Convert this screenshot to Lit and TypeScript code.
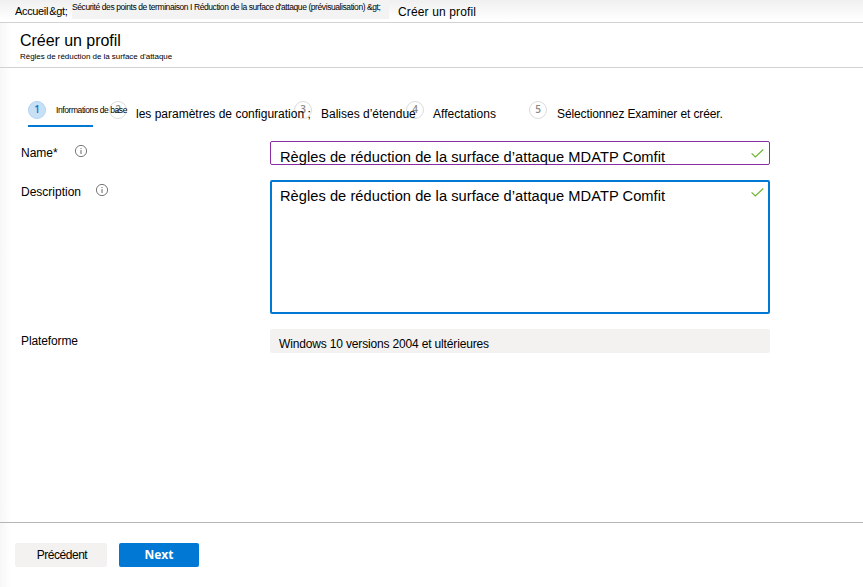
import { LitElement, html, css } from "lit";
import { customElement, property } from "lit/decorators.js";
import { classMap } from "lit/directives/class-map.js";

const infoIcon = html`<svg class="info" width="13" height="13" viewBox="0 0 13 13" fill="none" stroke="#6b6967">
  <circle cx="6" cy="6" r="5.6" stroke-width="0.9" />
  <path d="M6 5V9M6 3V4" stroke-width="1" />
</svg>`;

const checkIcon = html`<svg class="check" width="13" height="9" viewBox="0 0 13 9" fill="none" stroke="#6bb12c" stroke-width="1.1">
  <path d="M0.6 4.4L4.3 8L12.3 0.5" />
</svg>`;

interface Step { label: string; width: number; tone: string; }

const steps: Step[] = [
  { label: "Informations de base", width: 81, tone: "current" },
  { label: "les paramètres de configuration ;", width: 185, tone: "config" },
  { label: "Balises d’étendue", width: 112, tone: "tags" },
  { label: "Affectations", width: 123, tone: "assign" },
  { label: "Sélectionnez Examiner et créer.", width: 240, tone: "review" },
];

@customElement("wizard-steps")
export class WizardSteps extends LitElement {
  @property({ type: Array }) steps: Step[] = [];

  static styles = css`
    :host { display: block; }
    .steps { display: flex; padding-left: 28px; height: 27px; }
    .step { display: flex; flex: none; white-space: nowrap; box-sizing: border-box; align-items: flex-start; }
    .marker {
      box-sizing: border-box; flex: none; width: 18px; height: 18px; border-radius: 50%;
      border: 1px solid #dcdcdc; font: 600 10px/15px "Open Sans", sans-serif; text-align: center; color: #8a8886;
    }
    .label { position: relative; z-index: 1; font: 12px/14px "Liberation Sans", Arial, sans-serif; color: #000; margin: 6px 0 0 9px; }
    .current .marker { background: #c7e0f4; border-color: #b3d3f5; color: #0078d4; }
    .current .label { font-size: 8.5px; line-height: 10px; margin: 4px 0 0 10px; letter-spacing: -0.42px; }
    .assign .label { letter-spacing: 0.04px; }
    .review .label { margin-left: 10px; letter-spacing: -0.12px; }
    .bar { width: 65px; height: 2px; background: #0078d4; margin: -3px 0 0 28px; }
  `;

  render() {
    return html`<div class="steps">
        ${this.steps.map((s, i) => html`<div class=${classMap({ step: true, [s.tone]: true })} style="width:${s.width}px">
          <span class="marker">${i + 1}</span><span class="label">${s.label}</span>
        </div>`)}
      </div>
      <div class="bar"></div>`;
  }
}

@customElement("app-root")
export class AppRoot extends LitElement {
  static styles = css`
    :host {
      display: block; height: 587px; overflow: hidden; color: #000;
      background: linear-gradient(90deg, #f7f7f7, #fff 11px);
      font: 12px/14px "Liberation Sans", Arial, sans-serif; white-space: nowrap;
    }
    .page { display: flex; flex-direction: column; height: 587px; }
    .crumbs {
      display: flex; align-items: flex-start; box-sizing: border-box; height: 23px; padding-left: 15px;
      border-bottom: 1px solid #d2d2d2; background: linear-gradient(#f0f0f0, #fff 20px);
    }
    .home { width: 53px; margin-top: 4px; font-size: 11px; letter-spacing: -0.35px; word-spacing: -1.5px; }
    .section { box-sizing: border-box; width: 317px; height: 19px; background: #f3f3f3; margin-left: 4px; font-size: 8.5px; line-height: 15px; letter-spacing: -0.42px; }
    .here { margin: 5px 0 0 9px; letter-spacing: 0.14px; }
    .heading { box-sizing: border-box; height: 45px; padding: 9px 0 0 20px; border-bottom: 1px solid #d2d2d2; }
    .title { font-size: 16px; line-height: 18px; letter-spacing: -0.04px; }
    .subtitle { font-size: 8px; line-height: 10px; margin-top: 2px; letter-spacing: -0.045px; }
    wizard-steps { margin-top: 33px; }
    .form {
      display: grid; grid-template-columns: 249px 500px; grid-template-rows: 24px 134px 24px; row-gap: 15px;
      padding: 14px 0 0 21px;
    }
    .field-label { display: flex; align-items: flex-start; padding-top: 5px; }
    .info { margin: -1px 0 0 17px; }
    .description .info { margin-left: 15px; }
    .platform-label { letter-spacing: -0.12px; }
    .box { display: flex; justify-content: space-between; box-sizing: border-box; border-radius: 2px; font-size: 14.67px; line-height: 17px; letter-spacing: 0.035px; }
    .name-box { border: 1px solid #8a2da5; padding: 7px 5px 0 9px; }
    .area-box { border: 2px solid #0078d4; padding: 6px 4px 0 8px; }
    .check { flex: none; }
    .platform { background: #f3f2f1; font-size: 12px; line-height: 14px; padding: 8px 9px 0; letter-spacing: -0.16px; }
    .footer { display: flex; gap: 12px; box-sizing: border-box; margin-top: auto; height: 65px; padding: 20px 15px 0; border-top: 1px solid #b5b5b5; }
    .button { border: 0; padding: 0; height: 24px; border-radius: 2px; font: 12px/24px "Liberation Sans", Arial, sans-serif; }
    .previous { width: 92px; background: #f3f2f1; color: #000; padding-left: 2px; letter-spacing: -0.48px; }
    .next { width: 80px; background: #0078d4; color: #fff; font: 700 12px/24px "Open Sans", sans-serif; }
  `;

  render() {
    const name = "Règles de réduction de la surface d’attaque MDATP Comfit";
    return html`<div class="page">
      <nav class="crumbs">
        <span class="home">Accueil &amp;gt;</span>
        <span class="section">Sécurité des points de terminaison I Réduction de la surface d'attaque (prévisualisation) &amp;gt;</span>
        <span class="here">Créer un profil</span>
      </nav>
      <header class="heading">
        <div class="title">Créer un profil</div>
        <div class="subtitle">Règles de réduction de la surface d'attaque</div>
      </header>
      <wizard-steps .steps=${steps}></wizard-steps>
      <main class="form">
        <div class="field-label"><span>Name*</span>${infoIcon}</div>
        <div class="box name-box"><span>${name}</span>${checkIcon}</div>
        <div class="field-label description"><span>Description</span>${infoIcon}</div>
        <div class="box area-box"><span>${name}</span>${checkIcon}</div>
        <div class="field-label platform-label"><span>Plateforme</span></div>
        <div class="box platform"><span>Windows 10 versions 2004 et ultérieures</span></div>
      </main>
      <footer class="footer">
        <button class="button previous">Précédent</button>
        <button class="button next">Next</button>
      </footer>
    </div>`;
  }
}
